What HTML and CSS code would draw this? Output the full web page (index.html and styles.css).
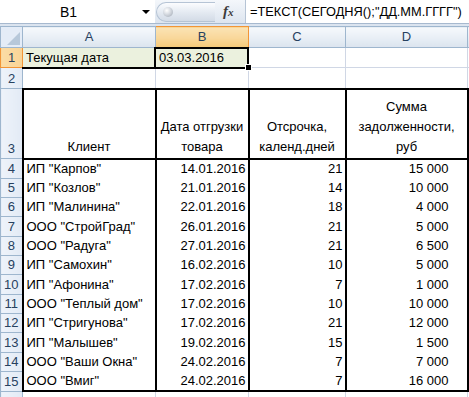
FILE: index.html
```html
<!DOCTYPE html>
<html lang="ru">
<head>
<meta charset="utf-8">
<title>Excel</title>
<link rel="stylesheet" href="styles.css">
</head>
<body>
<div class="fbar">
  <div class="namebox"><span class="nb-text">B1</span><span class="nb-arrow"></span></div>
  <div class="fxbox">
    <div class="pill"><span class="dot"></span></div>
    <span class="fx">f<span class="fx-x">x</span></span>
  </div>
  <div class="formula">=ТЕКСТ(СЕГОДНЯ();"ДД.ММ.ГГГГ")</div>
</div>
<div class="band"></div>
<table class="sheet">
  <colgroup>
    <col class="c-rh"><col class="c-a"><col class="c-b"><col class="c-c"><col class="c-d"><col class="c-e">
  </colgroup>
  <tr class="hdr">
    <th class="corner"><span class="tri"></span></th>
    <th class="ch">A</th><th class="ch csel">B</th><th class="ch">C</th><th class="ch">D</th><th class="ch"></th>
  </tr>
  <tr class="h20">
    <th class="rh rsel">1</th>
    <td class="fill a1">Текущая дата</td>
    <td class="fill b1">03.03.2016<span class="frame"></span><span class="handle"></span></td>
    <td></td><td></td><td></td>
  </tr>
  <tr class="h21">
    <th class="rh">2</th><td></td><td></td><td></td><td></td><td></td>
  </tr>
  <tr class="h70">
    <th class="rh">3</th>
    <td class="t top bl hcell">Клиент</td>
    <td class="t top hcell">Дата отгрузки<br>товара</td>
    <td class="t top hcell">Отсрочка,<br>календ.дней</td>
    <td class="t top br hcell">Сумма<br>задолженности,<br>руб</td>
    <td></td>
  </tr>
  <tr class="h20"><th class="rh">4</th><td class="t top bl">ИП "Карпов"</td><td class="t num">14.01.2016</td><td class="t num">21</td><td class="t br sum">15&nbsp;000</td><td></td></tr>
  <tr class="h19"><th class="rh">5</th><td class="t bl">ИП "Козлов"</td><td class="t num">21.01.2016</td><td class="t num">14</td><td class="t br sum">10&nbsp;000</td><td></td></tr>
  <tr class="h19"><th class="rh">6</th><td class="t bl">ИП "Малинина"</td><td class="t num">22.01.2016</td><td class="t num">18</td><td class="t br sum">4&nbsp;000</td><td></td></tr>
  <tr class="h20"><th class="rh">7</th><td class="t bl">ООО "СтройГрад"</td><td class="t num">26.01.2016</td><td class="t num">21</td><td class="t br sum">5&nbsp;000</td><td></td></tr>
  <tr class="h19"><th class="rh">8</th><td class="t bl">ООО "Радуга"</td><td class="t num">27.01.2016</td><td class="t num">21</td><td class="t br sum">6&nbsp;500</td><td></td></tr>
  <tr class="h19"><th class="rh">9</th><td class="t bl">ИП "Самохин"</td><td class="t num">16.02.2016</td><td class="t num">10</td><td class="t br sum">5&nbsp;000</td><td></td></tr>
  <tr class="h20"><th class="rh">10</th><td class="t bl">ИП "Афонина"</td><td class="t num">17.02.2016</td><td class="t num">7</td><td class="t br sum">1&nbsp;000</td><td></td></tr>
  <tr class="h19"><th class="rh">11</th><td class="t bl">ООО "Теплый дом"</td><td class="t num">17.02.2016</td><td class="t num">10</td><td class="t br sum">10&nbsp;000</td><td></td></tr>
  <tr class="h19"><th class="rh">12</th><td class="t bl">ИП "Стригунова"</td><td class="t num">17.02.2016</td><td class="t num">21</td><td class="t br sum">12&nbsp;000</td><td></td></tr>
  <tr class="h20"><th class="rh">13</th><td class="t bl">ИП "Малышев"</td><td class="t num">19.02.2016</td><td class="t num">15</td><td class="t br sum">1&nbsp;500</td><td></td></tr>
  <tr class="h19"><th class="rh">14</th><td class="t bl">ООО "Ваши Окна"</td><td class="t num">24.02.2016</td><td class="t num">7</td><td class="t br sum">7&nbsp;000</td><td></td></tr>
  <tr class="h19"><th class="rh">15</th><td class="t bl bb">ООО "Вмиг"</td><td class="t num bb">24.02.2016</td><td class="t num bb">7</td><td class="t br sum bb">16&nbsp;000</td><td></td></tr>
  <tr class="h20"><th class="rh"></th><td></td><td></td><td></td><td></td><td></td></tr>
</table>
</body>
</html>
```
FILE: styles.css
```css
html, body {
  margin: 0;
  padding: 0;
}
body {
  width: 469px;
  height: 397px;
  overflow: hidden;
  background: #ffffff;
  font-family: "Liberation Sans", Arial, sans-serif;
  font-size: 13px;
  color: #000;
}

/* ---------- formula bar ---------- */
.fbar {
  display: flex;
  height: 23px;
  border-bottom: 1px solid #a7b9cf;
  background: #ffffff;
}
.namebox {
  width: 155px;
  display: flex;
  align-items: center;
  position: relative;
}
.nb-text {
  width: 137px;
  text-align: center;
  font-size: 14px;
}
.nb-arrow {
  width: 0;
  height: 0;
  margin-left: 5px;
  border-left: 4px solid transparent;
  border-right: 4px solid transparent;
  border-top: 4px solid #000;
  margin-top: 1px;
}
.fxbox {
  width: 90px;
  display: flex;
  align-items: center;
  position: relative;
  background: linear-gradient(#f4f7fb, #dde5ef);
}
.pill {
  height: 18px;
  width: 58px;
  margin-left: 1px;
  border: 1px solid #b6c4d5;
  border-right: none;
  border-radius: 10px 0 0 10px;
  background: linear-gradient(#fbfcfe, #e3e9f1 55%, #d3dbe6);
  display: flex;
  align-items: center;
}
.dot {
  width: 10px;
  height: 10px;
  border-radius: 50%;
  margin-left: 6px;
  background: radial-gradient(circle at 38% 35%, #ffffff 0, #d9dde3 40%, #9ba4b0 100%);
}
.fx {
  margin-left: 8px;
  font-family: "Liberation Serif", serif;
  font-style: italic;
  font-weight: bold;
  font-size: 15px;
  color: #3c3c3c;
}
.fx-x {
  font-size: 11px;
}
.formula {
  flex: 1;
  display: flex;
  align-items: center;
  padding-left: 4px;
  border-left: 1px solid #b6c4d5;
  font-size: 12.8px;
  white-space: nowrap;
  overflow: hidden;
}
.band {
  height: 2px;
  background: #dbe4ef;
}

/* ---------- sheet ---------- */
.sheet {
  border-collapse: collapse;
  table-layout: fixed;
  width: 469px;
}
.c-rh { width: 22px; }
.c-a { width: 133px; }
.c-b { width: 93px; }
.c-c { width: 97px; }
.c-d { width: 122px; }
.c-e { width: 2px; }

.sheet td, .sheet th {
  box-sizing: border-box;
  padding: 0 3px;
  border: 1px solid #d0d7e5;
  white-space: nowrap;
  overflow: visible;
  font-weight: normal;
  vertical-align: bottom;
  line-height: 18px;
}
.sheet .hdr th { height: 21px; }
.sheet .h19 > * { height: 19px; }
.sheet .h20 > * { height: 20px; }
.sheet .h21 > * { height: 21px; }
.sheet .h70 > * { height: 70px; }

.sheet .ch {
  background: linear-gradient(#f6f9fc, #e9eff6 50%, #dbe4ee);
  border: 1px solid #9eb6ce;
  color: #27415f;
  text-align: center;
  vertical-align: middle;
}
.sheet .ch.csel {
  background: linear-gradient(#fbe3b5, #f9d89c 50%, #f5c978);
  border-color: #f29536;
}
.sheet .corner {
  background: #e4ecf7;
  border: 1px solid #9eb6ce;
  position: relative;
}
.tri {
  position: absolute;
  right: 2px;
  bottom: 2px;
  width: 0;
  height: 0;
  border-left: 13px solid transparent;
  border-bottom: 13px solid #b7c8da;
}
.sheet .rh {
  background: linear-gradient(90deg, #eef3fa, #e2eaf5);
  border: 1px solid #9eb6ce;
  color: #27415f;
  text-align: center;
  padding: 0;
}
.sheet .rh.rsel {
  background: linear-gradient(90deg, #fbdca5, #f9d496);
  border-color: #f29536;
}

.sheet .fill {
  background: #ebf1de;
}
.sheet .a1 {
  border-bottom: 2px solid #000;
}
.sheet .b1 {
  position: relative;
}
.frame {
  position: absolute;
  left: -2px;
  top: -1px;
  right: -1px;
  bottom: -2px;
  border: 2px solid #000;
}
.handle {
  position: absolute;
  right: -4px;
  bottom: -4px;
  width: 5px;
  height: 5px;
  background: #000;
  border: 1px solid #fff;
}

/* table region */
.sheet .t {
  border-left: 2px solid #000;
  border-right: 2px solid #000;
  border-top: 1px solid #ffffff;
  border-bottom: 1px solid #ffffff;
}
.sheet .t.top { border-top: 2px solid #000; }
.sheet .t.bb { border-bottom: 2px solid #000; }
.sheet .hcell {
  text-align: center;
  line-height: 20px;
  border-bottom: 2px solid #000;
  padding-bottom: 1px;
}
.sheet .num {
  text-align: right;
  padding-right: 2px;
}
.sheet .sum {
  text-align: right;
  padding-right: 18px;
}
```
